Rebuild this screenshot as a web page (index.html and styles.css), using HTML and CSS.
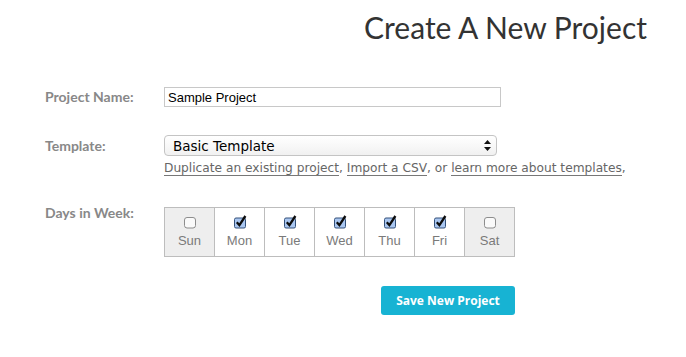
FILE: index.html
```html
<!DOCTYPE html>
<html lang="en">
<head>
    <meta charset="UTF-8">
    <title>Create A New Project</title>
    <link rel="stylesheet" href="styles.css">
</head>
<body>
    <h1 class="page-title">Create A New Project</h1>

    <form class="project-form">
        <!-- name -->
        <div class="form-row row-name">
            <label class="field-label" for="project_name">Project Name:</label>
            <input class="text-input" type="text" id="project_name" value="Sample Project">
        </div>

        <!-- template -->
        <div class="form-row row-template">
            <label class="field-label" for="template">Template:</label>
            <div class="field-body">
                <div class="select-box">
                    <span class="select-text">Basic Template</span>
                    <svg class="select-arrows" width="7" height="11" viewBox="0 0 7 11">
                        <path d="M3.5 0 L7 4 L0 4 Z" fill="#111"/>
                        <path d="M3.5 11 L7 7 L0 7 Z" fill="#111"/>
                    </svg>
                </div>
                <div class="template-links">
                    <a href="#">Duplicate an existing project</a>, <a href="#">Import a CSV</a>, or <a href="#">learn more about templates</a>,
                </div>
            </div>
        </div>

        <!-- days -->
        <div class="form-row row-days">
            <span class="field-label">Days in Week:</span>
            <table class="days-table">
                <tr>
                    <td class="day off">
                        <svg class="box" width="14" height="14" viewBox="0 0 14 14"><rect x="1.5" y="2.5" width="11" height="10.5" rx="2.5" fill="#fafafa" stroke="#8d8d8d"/></svg>
                        <div class="day-name">Sun</div>
                    </td>
                    <td class="day">
                        <svg class="box" width="14" height="14" viewBox="0 0 14 14"><rect x="1.5" y="3" width="11" height="10" rx="1.5" fill="#a9c6f0" stroke="#34507a"/><path d="M3.8 7.2 L6.4 10.2 L12.4 1" fill="none" stroke="#0c0c0c" stroke-width="2.3"/></svg>
                        <div class="day-name">Mon</div>
                    </td>
                    <td class="day">
                        <svg class="box" width="14" height="14" viewBox="0 0 14 14"><rect x="1.5" y="3" width="11" height="10" rx="1.5" fill="#a9c6f0" stroke="#34507a"/><path d="M3.8 7.2 L6.4 10.2 L12.4 1" fill="none" stroke="#0c0c0c" stroke-width="2.3"/></svg>
                        <div class="day-name">Tue</div>
                    </td>
                    <td class="day">
                        <svg class="box" width="14" height="14" viewBox="0 0 14 14"><rect x="1.5" y="3" width="11" height="10" rx="1.5" fill="#a9c6f0" stroke="#34507a"/><path d="M3.8 7.2 L6.4 10.2 L12.4 1" fill="none" stroke="#0c0c0c" stroke-width="2.3"/></svg>
                        <div class="day-name">Wed</div>
                    </td>
                    <td class="day">
                        <svg class="box" width="14" height="14" viewBox="0 0 14 14"><rect x="1.5" y="3" width="11" height="10" rx="1.5" fill="#a9c6f0" stroke="#34507a"/><path d="M3.8 7.2 L6.4 10.2 L12.4 1" fill="none" stroke="#0c0c0c" stroke-width="2.3"/></svg>
                        <div class="day-name">Thu</div>
                    </td>
                    <td class="day">
                        <svg class="box" width="14" height="14" viewBox="0 0 14 14"><rect x="1.5" y="3" width="11" height="10" rx="1.5" fill="#a9c6f0" stroke="#34507a"/><path d="M3.8 7.2 L6.4 10.2 L12.4 1" fill="none" stroke="#0c0c0c" stroke-width="2.3"/></svg>
                        <div class="day-name">Fri</div>
                    </td>
                    <td class="day off">
                        <svg class="box" width="14" height="14" viewBox="0 0 14 14"><rect x="1.5" y="2.5" width="11" height="10.5" rx="2.5" fill="#fafafa" stroke="#8d8d8d"/></svg>
                        <div class="day-name">Sat</div>
                    </td>
                </tr>
            </table>
        </div>

        <div class="form-actions">
            <button type="button" class="save-button">Save New Project</button>
        </div>
    </form>
</body>
</html>
```

FILE: styles.css
```css
body {
    margin: 0;
    background: #fff;
    font-family: 'Liberation Sans', Arial, sans-serif;
}
.page-title {
    margin: 0;
    padding: 9px 39px 0 0;
    text-align: right;
    font-family: Lato, 'Open Sans', sans-serif;
    font-weight: 400;
    font-size: 30px;
    line-height: 36px;
    color: #333;
}
.project-form {
    padding: 42px 0 0 45px;
}
.form-row {
    display: flex;
    align-items: flex-start;
}
.field-label {
    width: 119px;
    flex: none;
    font-family: Lato, sans-serif;
    font-weight: 700;
    font-size: 14px;
    line-height: 20px;
    color: #888;
}
.text-input {
    width: 337px;
    height: 20px;
    box-sizing: border-box;
    margin: 0;
    padding: 0 3px;
    border: 1px solid #c8c8c8;
    font-family: 'Liberation Sans', Arial, sans-serif;
    font-size: 13px;
    color: #000;
}
.row-template {
    margin-top: 28px;
}
.row-template .field-label {
    line-height: 21px;
}
.select-box {
    width: 333px;
    height: 21px;
    box-sizing: border-box;
    border: 1px solid #c4c4c4;
    border-radius: 4px;
    background: linear-gradient(#fff, #f1f1f1);
    display: flex;
    align-items: center;
    justify-content: space-between;
    padding: 0 5px 0 8px;
}
.select-text {
    font-family: 'DejaVu Sans', sans-serif;
    font-size: 13.5px;
    color: #000;
}
.template-links {
    margin-top: 3px;
    font-family: 'DejaVu Sans', sans-serif;
    font-size: 12.2px;
    line-height: 18px;
    color: #666;
    white-space: nowrap;
}
.template-links a {
    color: #666;
    text-decoration: none;
    border-bottom: 1px solid #777;
}
.row-days {
    margin-top: 30px;
}
.row-days .field-label {
    line-height: 12px;
}
.days-table {
    width: 351px;
    table-layout: fixed;
    border-collapse: collapse;
}
.day {
    height: 49px;
    padding: 7px 0 0;
    box-sizing: border-box;
    border: 1px solid #bdbdbd;
    text-align: center;
    vertical-align: top;
    background: #fff;
}
.day.off {
    background: #eeeeee;
}
.box {
    display: block;
    margin: 0 auto;
}
.day-name {
    margin-top: 4px;
    font-family: 'Liberation Sans', Arial, sans-serif;
    font-size: 13px;
    line-height: 16px;
    color: #7a7a7a;
}
.form-actions {
    padding: 29px 0 0 336px;
}
.save-button {
    width: 134px;
    height: 29px;
    border: none;
    border-radius: 3px;
    background: #17b3d3;
    color: #fff;
    font-family: 'Open Sans', sans-serif;
    font-weight: bold;
    font-size: 12px;
    cursor: pointer;
}
```
